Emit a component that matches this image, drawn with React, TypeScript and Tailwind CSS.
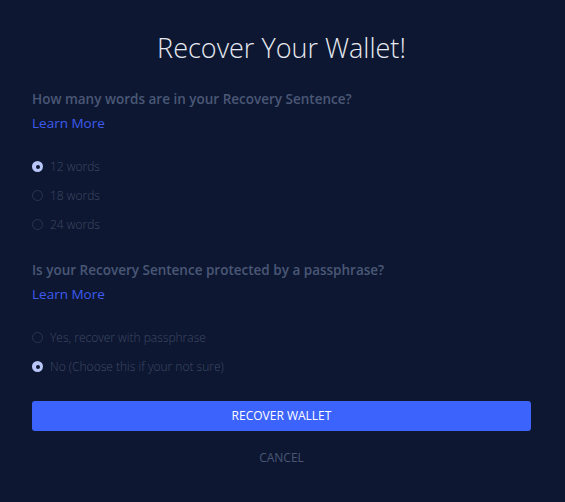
const Radio = ({ checked, label }: { checked?: boolean; label: string }) => (
  <label className="flex items-center gap-[7px] h-[29px]">
    {checked ? (
      <span className="w-[11px] h-[11px] rounded-full bg-[#b8c6f7] flex items-center justify-center">
        <span className="w-[4px] h-[4px] rounded-full bg-[#0d1731]" />
      </span>
    ) : (
      <span className="w-[11px] h-[11px] rounded-full border-[1.5px] border-[#2c3550]" />
    )}
    <span className="text-[12px] font-light text-[#3e4965] leading-[29px]">{label}</span>
  </label>
);

const Question = ({ text }: { text: string }) => (
  <div>
    <p className="text-[13.5px] font-semibold text-[#4a5776] leading-[18px]">{text}</p>
    <a href="#" className="block mt-[6px] text-[13.5px] text-[#3d5bf0] leading-[18px]">
      Learn More
    </a>
  </div>
);

export default function App() {
  return (
    <div
      className="w-[565px] h-[502px] bg-[#0d1731] pl-[32px] pr-[34px] pt-[29px]"
      style={{ fontFamily: '"Open Sans", sans-serif' }}
    >
      <h1 className="text-center text-[27px] font-light text-[#e6e9f0] leading-[38px]">
        Recover Your Wallet!
      </h1>

      <div className="mt-[23px]">
        <Question text="How many words are in your Recovery Sentence?" />
        <div className="mt-[20px] flex flex-col">
          <Radio checked label="12 words" />
          <Radio label="18 words" />
          <Radio label="24 words" />
        </div>
      </div>

      <div className="mt-[22px]">
        <Question text="Is your Recovery Sentence protected by a passphrase?" />
        <div className="mt-[20px] flex flex-col">
          <Radio label="Yes, recover with passphrase" />
          <Radio checked label="No (Choose this if your not sure)" />
        </div>
      </div>

      <button className="mt-[20px] w-full h-[30px] rounded-[3px] bg-[#3d63fd] text-white text-[12px] font-medium">
        RECOVER WALLET
      </button>
      <button className="block mx-auto mt-[18px] text-[12px] text-[#4a5776]">CANCEL</button>
    </div>
  );
}
